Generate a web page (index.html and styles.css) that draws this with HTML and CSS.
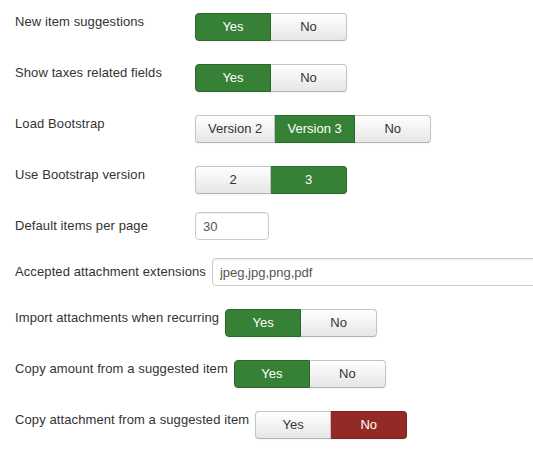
FILE: index.html
```html
<!DOCTYPE html>
<html lang="en">
<head>
    <meta charset="UTF-8">
    <title>Options</title>
    <link rel="stylesheet" href="styles.css">
</head>
<body>
    <form class="options">
        <div class="control-group">
            <label class="control-label">New item suggestions</label>
            <div class="btn-group">
                <span class="btn btn-yes active">Yes</span>
                <span class="btn">No</span>
            </div>
        </div>
        <div class="control-group">
            <label class="control-label">Show taxes related fields</label>
            <div class="btn-group">
                <span class="btn btn-yes active">Yes</span>
                <span class="btn">No</span>
            </div>
        </div>
        <div class="control-group">
            <label class="control-label">Load Bootstrap</label>
            <div class="btn-group">
                <span class="btn btn-wide">Version 2</span>
                <span class="btn btn-wide btn-yes active">Version 3</span>
                <span class="btn">No</span>
            </div>
        </div>
        <div class="control-group">
            <label class="control-label">Use Bootstrap version</label>
            <div class="btn-group">
                <span class="btn">2</span>
                <span class="btn btn-yes active">3</span>
            </div>
        </div>
        <div class="control-group">
            <label class="control-label">Default items per page</label>
            <input class="input-small" type="text" value="30">
        </div>
        <div class="control-group">
            <label class="control-label">Accepted attachment extensions</label>
            <input class="input-xxlarge" type="text" value="jpeg,jpg,png,pdf">
        </div>
        <div class="control-group">
            <label class="control-label">Import attachments when recurring</label>
            <div class="btn-group">
                <span class="btn btn-yes active">Yes</span>
                <span class="btn">No</span>
            </div>
        </div>
        <div class="control-group">
            <label class="control-label">Copy amount from a suggested item</label>
            <div class="btn-group">
                <span class="btn btn-yes active">Yes</span>
                <span class="btn">No</span>
            </div>
        </div>
        <div class="control-group">
            <label class="control-label">Copy attachment from a suggested item</label>
            <div class="btn-group">
                <span class="btn">Yes</span>
                <span class="btn btn-no active">No</span>
            </div>
        </div>
    </form>
</body>
</html>
```

FILE: styles.css
```css
html, body {
    overflow: hidden;
}

body {
    font-family: "Liberation Sans", Arial, sans-serif;
    font-size: 13px;
    line-height: 18px;
    color: #333;
    background-color: #fff;
    margin: 0;
    padding: 8px 0 0 15px;
}

.options {
    overflow: hidden;
}

.control-group {
    display: flex;
    align-items: flex-start;
    margin-bottom: 18px;
    white-space: nowrap;
}

.control-label {
    box-sizing: border-box;
    flex-shrink: 0;
    min-width: 180px;
    padding-top: 5px;
    padding-right: 6px;
    letter-spacing: 0.1px;
}

.btn-group {
    display: flex;
    flex-shrink: 0;
    margin-top: 5px;
}

.btn {
    box-sizing: border-box;
    min-width: 76px;
    height: 28px;
    padding: 4px 12px;
    text-align: center;
    color: #333;
    background-color: #f3f3f3;
    background-image: linear-gradient(to bottom, #fff, #e6e6e6);
    border: 1px solid #c4c4c4;
    border-bottom-color: #b3b3b3;
    box-shadow: 0 1px 2px rgba(0, 0, 0, 0.05);
}

.btn-wide {
    min-width: 80px;
}

.btn + .btn {
    border-left: 0;
}

.btn:first-child {
    border-radius: 4px 0 0 4px;
}

.btn:last-child {
    border-radius: 0 4px 4px 0;
}

.btn-yes.active {
    color: #fff;
    background: #378137;
    border-color: #2c672c;
}

.btn-no.active {
    color: #fff;
    background: #942a25;
    border-color: #7a221e;
}

input {
    box-sizing: border-box;
    flex-shrink: 0;
    height: 28px;
    padding: 4px 7px;
    font-family: inherit;
    font-size: 13px;
    color: #555;
    border: 1px solid #ccc;
    border-radius: 4px;
    box-shadow: inset 0 1px 1px rgba(0, 0, 0, 0.075);
}

.input-small {
    width: 74px;
}

.input-xxlarge {
    width: 330px;
}
```
